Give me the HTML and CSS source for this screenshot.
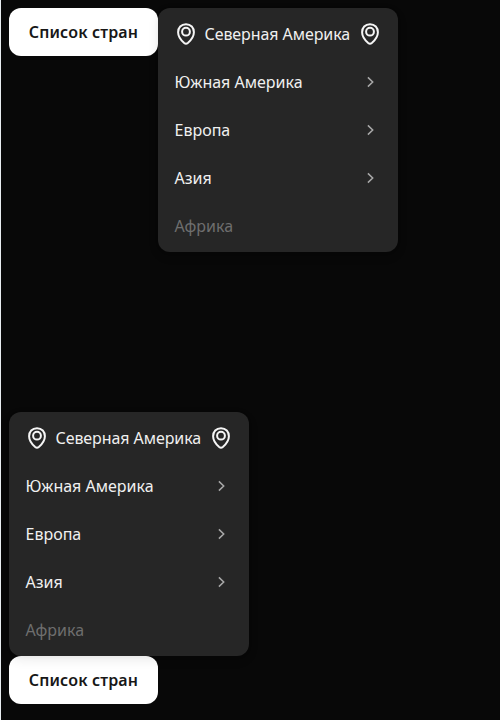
FILE: index.html
```html
<!DOCTYPE html>
<html lang="ru">
<head>
<meta charset="utf-8">
<title>Список стран</title>
<link rel="stylesheet" href="styles.css">
</head>
<body>
<svg class="sprite" aria-hidden="true">
  <symbol id="pin" viewBox="0 0 24 24"><path d="M12 2.2C7.1 2.2 4.1 5.8 4.1 10.2C4.1 14.8 7.6 18.7 10.2 21C11.3 21.9 12.7 21.9 13.8 21C16.4 18.7 19.9 14.8 19.9 10.2C19.9 5.8 16.9 2.2 12 2.2Z"/><circle cx="12" cy="9.7" r="3.9"/></symbol>
  <symbol id="chevron" viewBox="0 0 16 16"><path d="M5.9 3.4L10.7 8L5.9 12.6"/></symbol>
</svg>
<div class="group group-right">
  <button class="trigger"><span>Список стран</span></button>
  <ul class="menu">
    <li class="item"><svg class="pin"><use href="#pin"/></svg><span class="label north">Северная Америка</span><svg class="pin"><use href="#pin"/></svg></li>
    <li class="item"><span class="label">Южная Америка</span><svg class="chevron"><use href="#chevron"/></svg></li>
    <li class="item"><span class="label">Европа</span><svg class="chevron"><use href="#chevron"/></svg></li>
    <li class="item"><span class="label">Азия</span><svg class="chevron"><use href="#chevron"/></svg></li>
    <li class="item disabled"><span class="label">Африка</span></li>
  </ul>
</div>
<div class="group group-top">
  <ul class="menu">
    <li class="item"><svg class="pin"><use href="#pin"/></svg><span class="label north">Северная Америка</span><svg class="pin"><use href="#pin"/></svg></li>
    <li class="item"><span class="label">Южная Америка</span><svg class="chevron"><use href="#chevron"/></svg></li>
    <li class="item"><span class="label">Европа</span><svg class="chevron"><use href="#chevron"/></svg></li>
    <li class="item"><span class="label">Азия</span><svg class="chevron"><use href="#chevron"/></svg></li>
    <li class="item disabled"><span class="label">Африка</span></li>
  </ul>
  <button class="trigger"><span>Список стран</span></button>
</div>
</body>
</html>
```

FILE: styles.css
```css
* { box-sizing: border-box; }
html { background: #080808; }
body {
  margin: 0;
  height: 720px;
  padding: 8px 8px 16px;
  border-left: 1px solid #e8edf0;
  background: #080808;
  color: #f0f0f0;
  font: 16px/22px "Noto Sans", "Open Sans", sans-serif;
  display: flex;
  flex-direction: column;
  justify-content: space-between;
  overflow: hidden;
}
.sprite { display: none; }
.group { display: flex; align-items: flex-start; }
.group-top { flex-direction: column; }
.trigger {
  width: 149px;
  height: 48px;
  padding: 0;
  border: 0;
  border-radius: 12px;
  background: #fff;
  color: #171717;
  font: 600 16px/22px "Noto Sans", "Open Sans", sans-serif;
  letter-spacing: 0.13px;
}
.menu {
  position: relative;
  width: 240px;
  margin: 0;
  padding: 2px 0;
  list-style: none;
  border-radius: 12px;
  background: #262626;
  box-shadow: 0 4px 12px rgba(0, 0, 0, .08), 0 1px 4px rgba(0, 0, 0, .04);
}
.item {
  display: flex;
  align-items: center;
  height: 48px;
  padding: 0 16px;
}
.label {
  flex: 1;
  padding-left: 0.5px;
  white-space: nowrap;
}
.north { letter-spacing: -0.07px; }
.pin, .chevron {
  flex: none;
  fill: none;
  stroke: #f5f5f5;
  stroke-width: 2;
}
.pin { width: 24px; height: 24px; }
.pin + .label { margin-left: 6px; }
.chevron {
  width: 16px;
  height: 16px;
  margin-right: 4px;
  stroke: #a8a8a8;
  stroke-width: 1.5;
}
.disabled { color: #6e6e6e; }
```
